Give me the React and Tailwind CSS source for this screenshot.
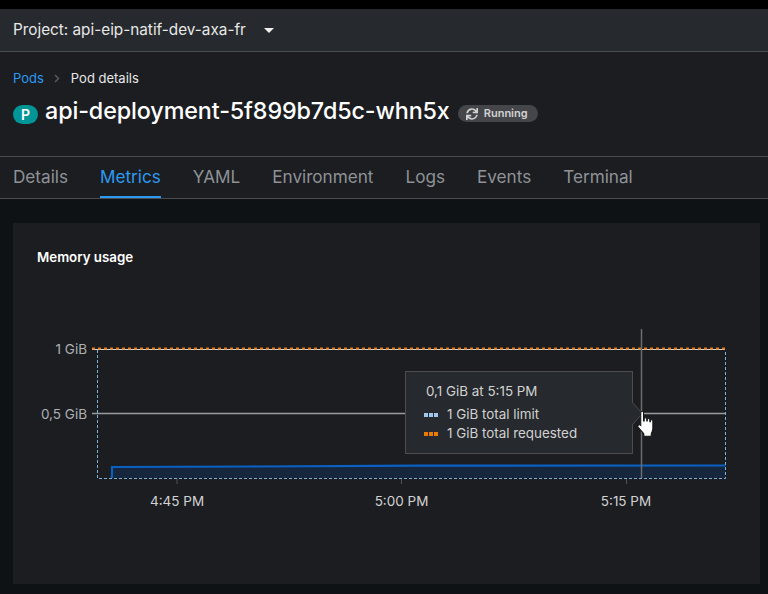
const font = { fontFamily: '"Inter", "Liberation Sans", sans-serif' };

function Hand() {
  return (
    <svg className="absolute left-[622px] top-[187px]" width="23" height="30" viewBox="0 0 20 26">
      <path
        d="M5 2.2c0-1.5 2.4-1.5 2.4 0v7.3h.6V7.6c0-1.3 2.2-1.3 2.2 0v2h.5V8.4c0-1.3 2.2-1.3 2.2 0v1.8h.5V9.4c0-1.3 2.1-1.3 2.1 0v6.9c0 2-1 3-1.4 4.4v2.1H7.7v-2c-.8-1.6-3-3.2-5-6.1-.9-1.4 1-2.7 2.3-1.4V2.2z"
        fill="#ffffff"
        stroke="#151515"
        strokeWidth="0.9"
      />
    </svg>
  );
}

function Sync() {
  return (
    <svg width="12" height="12" viewBox="0 0 512 512" fill="#d2d2d2">
      <path d="M440.65 12.57l4 82.77A247.16 247.16 0 0 0 255.83 8C134.73 8 33.91 94.92 12.29 209.82A12 12 0 0 0 24.09 224h49.05a12 12 0 0 0 11.67-9.26 175.91 175.91 0 0 1 317-56.94l-101.46-4.86a12 12 0 0 0-12.57 12v47.41a12 12 0 0 0 12 12H500a12 12 0 0 0 12-12V12a12 12 0 0 0-12-12h-47.37a12 12 0 0 0-11.98 12.57zM255.83 432a175.61 175.61 0 0 1-146-77.8l101.8 4.87a12 12 0 0 0 12.57-12v-47.4a12 12 0 0 0-12-12H12a12 12 0 0 0-12 12V500a12 12 0 0 0 12 12h47.35a12 12 0 0 0 12-12.6l-4.15-82.57A247.17 247.17 0 0 0 255.83 504c121.11 0 221.93-86.92 243.55-201.82a12 12 0 0 0-11.8-14.18h-49.05a12 12 0 0 0-11.67 9.26A175.86 175.86 0 0 1 255.83 432z" />
    </svg>
  );
}

function Chart() {
  const labelY = "#aeb0b3";
  const labelX = "#d2d2d2";
  return (
    <svg className="block mt-[53px]" width="747" height="230" viewBox="13 320 747 230" style={font}>
      <path d="M112 478V467L250 466.5L420 465.6L725.5 465.5V478Z" fill="#16263c" />
      <path d="M112 478V467L250 466.5L420 465.6L725.5 465.5" fill="none" stroke="#0b60c4" strokeWidth="2.2" />
      <line x1="92" x2="725" y1="413.5" y2="413.5" stroke="#9a9c9f" strokeWidth="1.6" />
      <line x1="92" x2="725" y1="349.5" y2="349.5" stroke="#d8d8d8" strokeWidth="1" />
      <line x1="92" x2="725" y1="348.5" y2="348.5" stroke="#ec7a08" strokeWidth="2" strokeDasharray="3 3" />
      <path d="M97.5 350V478.5H725.5V350" fill="none" stroke="#7fb0da" strokeWidth="1" strokeDasharray="3 2" />
      <line x1="641.5" x2="641.5" y1="329" y2="478" stroke="#6a6e73" strokeWidth="1.5" />
      <line x1="177" x2="177" y1="479" y2="484" stroke="#4f5255" />
      <line x1="401.5" x2="401.5" y1="479" y2="484" stroke="#4f5255" />
      <line x1="626.5" x2="626.5" y1="479" y2="484" stroke="#4f5255" />
      <text x="87" y="354" textAnchor="end" fontSize="13.5" fill={labelY}>1 GiB</text>
      <text x="87" y="419" textAnchor="end" fontSize="13.5" fill={labelY}>0,5 GiB</text>
      <text x="177" y="506" textAnchor="middle" fontSize="13.5" fill={labelX}>4:45 PM</text>
      <text x="401.5" y="506" textAnchor="middle" fontSize="13.5" fill={labelX}>5:00 PM</text>
      <text x="626" y="506" textAnchor="middle" fontSize="13.5" fill={labelX}>5:15 PM</text>
    </svg>
  );
}

function Legend({ color, children }) {
  return (
    <div className="flex items-center h-[19px]">
      <span className="flex gap-[1px] w-[14px] mr-[9px]">
        <span className={`w-[4px] h-[4px] ${color}`} />
        <span className={`w-[4px] h-[4px] ${color}`} />
        <span className={`w-[4px] h-[4px] ${color}`} />
      </span>
      <span>{children}</span>
    </div>
  );
}

function Tooltip() {
  return (
    <div className="absolute left-[392px] top-[148px] w-[228px] h-[83px] bg-[#26292d] border border-[#4a4c4f] text-[13.4px] text-[#d2d2d2] pl-[18px] pt-[10px]">
      <div className="ml-[2px] h-[19px] leading-[19px]">0,1 GiB at 5:15 PM</div>
      <div className="mt-[4px]">
        <Legend color="bg-[#9ec7eb]">1 GiB total limit</Legend>
        <Legend color="bg-[#ec7a08]">1 GiB total requested</Legend>
      </div>
      <svg className="absolute left-[226px] top-[29px]" width="12" height="26" viewBox="0 0 12 26">
        <path d="M0 1L10.5 12.5L0 24Z" fill="#26292d" />
        <path d="M0 1L10.5 12.5L0 24" fill="none" stroke="#4a4c4f" />
      </svg>
    </div>
  );
}

export default function App() {
  const tabs = ["Details", "Metrics", "YAML", "Environment", "Logs", "Events", "Terminal"];
  return (
    <div className="w-[768px] h-[594px] overflow-hidden bg-[#0f1214] flex flex-col" style={font}>
      <div className="h-[9px] bg-black shrink-0" />
      <div className="h-[43px] shrink-0 bg-[#26292d] border-b border-[#4a4c4f] flex items-center pl-[13px] text-[15.3px] text-[#e8e8e8]">
        <span>Project: api-eip-natif-dev-axa-fr</span>
        <span className="ml-[18px] w-0 h-0 border-x-[5.5px] border-x-transparent border-t-[5.5px] border-t-[#f0f0f0]" />
      </div>
      <div className="h-[105px] shrink-0 bg-[#1b1d21] border-b border-[#4a4c4f] pl-[13px] pt-[18px]">
        <div className="flex items-center h-[17px] text-[13px]">
          <span className="text-[#2b9af3]">Pods</span>
          <svg className="ml-[10px] mr-[11px]" width="6" height="9" viewBox="0 0 6 9" fill="none" stroke="#55585c" strokeWidth="1.5">
            <path d="M1 1l3.5 3.5L1 8" />
          </svg>
          <span className="text-[#e8e8e8]">Pod details</span>
        </div>
        <div className="flex items-center mt-[9px] h-[32px]">
          <span className="mt-[5px] w-[25px] h-[19px] rounded-full bg-[#009596] text-white text-[14px] font-semibold flex items-center justify-center">P</span>
          <span className="pb-[1px] ml-[7px] text-[23.3px] font-medium text-white tracking-[-0.1px] whitespace-nowrap">api-deployment-5f899b7d5c-whn5x</span>
          <span className="mt-[3px] ml-[8px] h-[17px] w-[80px] rounded-full bg-[#44464a] text-[#d2d2d2] text-[11px] font-semibold flex items-center pl-[8px] gap-[6px]">
            <Sync />
            Running
          </span>
        </div>
      </div>
      <div className="h-[42px] shrink-0 bg-[#1b1d21] border-b border-[#4a4c4f] flex pl-[13px] gap-[32px] text-[17.15px]">
        {tabs.map((t) =>
          t === "Metrics" ? (
            <div key={t} className="h-[41px] text-[#2b9af3] border-b-2 border-[#2b9af3] flex items-center pt-[1px]">{t}</div>
          ) : (
            <div key={t} className="h-[41px] text-[#8f9296] border-b-2 border-transparent flex items-center pt-[1px]">{t}</div>
          )
        )}
      </div>
      <div className="pt-[24px] pl-[13px]">
        <div className="relative w-[747px] h-[361px] bg-[#1b1d21] pt-[24px]">
          <div className="pl-[24px] h-[20px] leading-[20px] text-[13.3px] font-semibold text-white">Memory usage</div>
          <Chart />
          <Tooltip />
          <Hand />
        </div>
      </div>
    </div>
  );
}
